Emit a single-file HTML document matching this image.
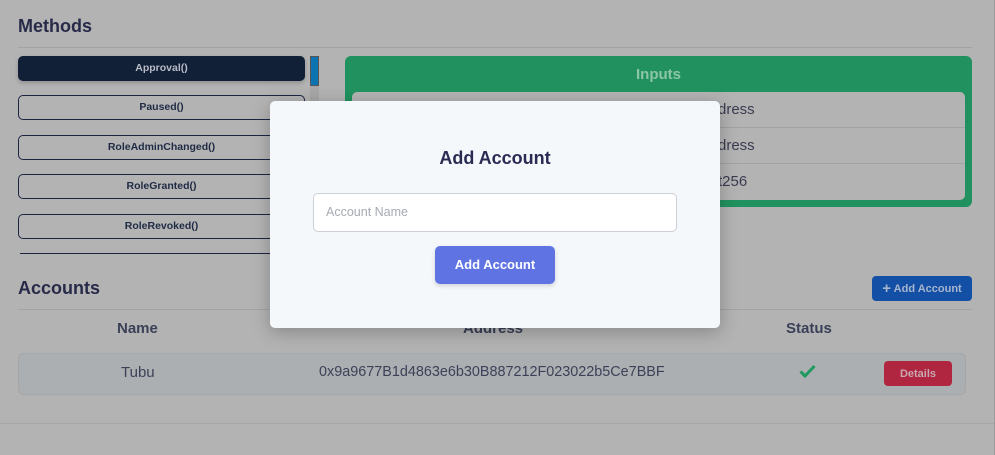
<!DOCTYPE html>
<html><head><style>
*{box-sizing:border-box;margin:0;padding:0}
body{width:995px;height:455px;background:#b3b3b3;font-family:"Liberation Sans",sans-serif;position:relative;overflow:hidden;color:#272a48}
.abs{position:absolute}
h2{position:absolute;font-size:18px;font-weight:bold;color:#272a48}
.hr{position:absolute;height:1px;background:#a3a3a3}
.m{position:absolute;left:18px;width:287px;height:25px;border:1px solid #1b2643;border-radius:5px;font-size:10.5px;font-weight:bold;text-align:center;line-height:23px;color:#1f2a44}
.cell{position:absolute;left:352px;width:613px;height:36px;border-bottom:1px solid #a3a3a3;font-size:15px;line-height:36px;color:#3a3d50;padding-left:366px}
</style></head><body>
<h2 style="left:18px;top:16px">Methods</h2>
<div class="hr" style="left:18px;top:47px;width:954px"></div>
<div class="m" style="top:56px;background:#111f37;border-color:#111f37;color:#b8bcc6;box-shadow:0 2px 4px rgba(0,0,0,.2)">Approval()</div>
<div class="m" style="top:95px">Paused()</div>
<div class="m" style="top:135px">RoleAdminChanged()</div>
<div class="m" style="top:174px">RoleGranted()</div>
<div class="m" style="top:214px">RoleRevoked()</div>
<div class="abs" style="left:20px;top:253px;width:285px;height:1px;background:#1b2643"></div>
<div class="abs" style="left:310px;top:56px;width:9px;height:200px;background:#a7a7a7"></div>
<div class="abs" style="left:310px;top:56px;width:9px;height:30px;background:#0a73b0;border:1px solid #555"></div>
<div class="abs" style="left:345px;top:56px;width:627px;height:151px;background:#21925f;border-radius:6px"></div>
<div class="abs" style="left:345px;top:66px;width:627px;text-align:center;font-size:15px;font-weight:bold;color:#8cc5a8">Inputs</div>
<div class="abs" style="left:352px;top:92px;width:613px;height:108px;background:#b3b3b3;border-radius:5px;overflow:hidden">
<div class="cell" style="left:0;top:0;">dress</div>
<div class="cell" style="left:0;top:36px;">dress</div>
<div class="cell" style="left:0;top:72px;border:0">t256</div>
</div>
<h2 style="left:18px;top:278px">Accounts</h2>
<div class="hr" style="left:18px;top:309px;width:954px"></div>
<div class="abs" style="left:872px;top:276px;width:100px;height:25px;background:#1350a5;border-radius:4px;color:#a7b5cf;font-size:11px;font-weight:bold;line-height:25px;text-align:center"><span style="font-size:15px;vertical-align:-1px">+</span> Add Account</div>
<div class="abs" style="left:117px;top:320px;font-size:15px;font-weight:bold;color:#3a4058">Name</div>
<div class="abs" style="left:463px;top:320px;font-size:15px;font-weight:bold;color:#3a4058">Address</div>
<div class="abs" style="left:786px;top:320px;font-size:15px;font-weight:bold;color:#3a4058">Status</div>
<div class="abs" style="left:18px;top:353px;width:948px;height:42px;background:#abafb1;border:1px solid #a5a8aa;border-radius:5px"></div>
<div class="abs" style="left:121px;top:364px;font-size:15px;color:#3d4158">Tubu</div>
<div class="abs" style="left:319px;top:364px;font-size:14.4px;color:#3d4158">0x9a9677B1d4863e6b30B887212F023022b5Ce7BBF</div>
<svg class="abs" style="left:799px;top:364px" width="17" height="14" viewBox="0 0 17 14"><path d="M1.5 7.5l4.5 4.5 9.5-10" stroke="#1f9a5e" stroke-width="3" fill="none"/></svg>
<div class="abs" style="left:884px;top:361px;width:68px;height:25px;background:#b02540;border-radius:4px;color:#c8a8b0;font-size:11px;font-weight:bold;line-height:27px;text-align:center">Details</div>
<div class="abs" style="left:0;top:423px;width:995px;height:1px;background:#a6a6a6"></div>
<div class="abs" style="left:994px;top:0;width:1px;height:455px;background:#9a9a9a"></div>
<div class="abs" style="left:270px;top:101px;width:450px;height:227px;background:#f5f8fb;border-radius:5px;box-shadow:0 4px 18px rgba(0,0,0,.25)">
<div class="abs" style="left:0;top:47px;width:450px;text-align:center;font-size:18px;font-weight:bold;color:#2a2b52">Add Account</div>
<div class="abs" style="left:43px;top:92px;width:364px;height:39px;background:#fff;border:1px solid #ccd0d6;border-radius:5px;font-size:12.5px;color:#a6abb3;line-height:37px;padding-left:12px">Account Name</div>
<div class="abs" style="left:165px;top:145px;width:120px;height:38px;background:#5f73e3;border-radius:5px;color:#fff;font-size:13px;font-weight:bold;line-height:38px;text-align:center;box-shadow:0 2px 5px rgba(0,0,0,.15)">Add Account</div>
</div>
</body></html>
